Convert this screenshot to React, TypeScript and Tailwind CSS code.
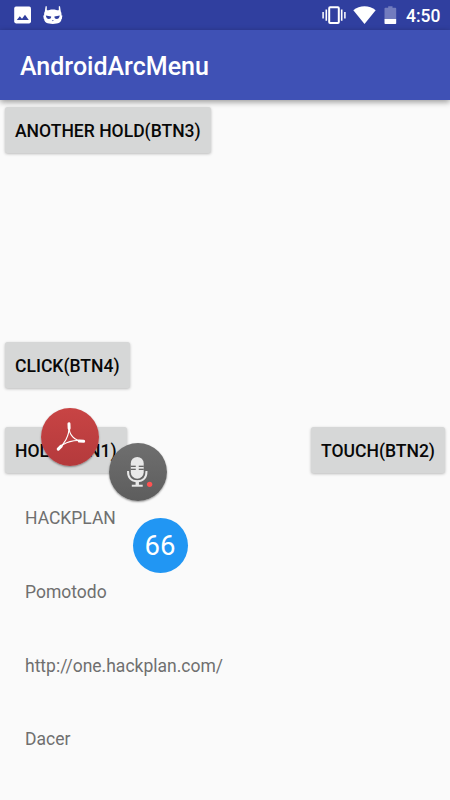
import type { ReactNode } from "react";

const links = ["HACKPLAN", "Pomotodo", "http://one.hackplan.com/", "Dacer"];

function StatusBar() {
  return (
    <div className="flex h-[30px] items-center justify-between bg-[#303f9f] pr-[10px] pl-[14px] text-white">
      <div className="flex items-center gap-3">
        {/* Screenshot notification */}
        <svg className="h-[30px] w-[17px]" viewBox="0 0 17 30" fill="none">
          <rect x="0.2" y="6.6" width="16.8" height="16.8" rx="1.8" fill="#fff" />
          <path d="M2.8 20 5.8 16.2 8 18.7 11 14.8 14.8 20Z" fill="#303f9f" />
        </svg>

        {/* Cyanogen head */}
        <svg className="h-[30px] w-5" viewBox="0 0 20 30" fill="none">
          <path
            d="M2.6 6.2H3.8V10.1C4.6 10.6 5.4 10.1 6.4 9.9C8.6 9.5 11 9.5 13.2 9.9C14.2 10.1 15 10.6 15.8 10.1V6.2H17L17.8 11.6C18.4 12.4 18.5 13.3 18.5 14.4V18.8C18.5 22.4 15.4 23.9 9.8 23.9S1.1 22.4 1.1 18.8V14.4C1.1 13.3 1.2 12.4 1.8 11.6Z"
            fill="#fff"
          />
          <path d="M0.2 15.4H2V19H0.8ZM19.4 15.4H17.6V19H18.8Z" fill="#fff" />
          <path
            d="M2.8 15.4 8.2 16.4C8.2 18.2 7.2 18.9 5.8 18.9S3.2 17.8 2.8 15.4ZM16.8 15.4 11.4 16.4C11.4 18.2 12.4 18.9 13.8 18.9S16.4 17.8 16.8 15.4Z"
            fill="#303f9f"
          />
          <path d="M8.8 20.2H10.8L9.8 21.2Z" fill="#303f9f" />
        </svg>
      </div>

      <div className="flex items-center">
        {/* Vibrate */}
        <svg className="h-[30px] w-6" viewBox="0 0 24 30" fill="none" stroke="#fff">
          <rect x="7.2" y="7.3" width="9.6" height="15.6" rx="0.9" strokeWidth="2" />
          <path d="M4.3 9.6V20.8M19.7 9.6V20.8" strokeWidth="1.6" />
          <path d="M1.1 12V18.4M22.9 12V18.4" strokeWidth="1.5" />
        </svg>

        {/* Wifi */}
        <svg className="ml-[7px] h-[30px] w-[23px]" viewBox="0 0 23 30">
          <path d="M0.3 10.3C6.5 4.8 16.5 4.8 22.7 10.3L11.5 24Z" fill="#fff" />
        </svg>

        {/* Battery */}
        <svg className="ml-2 h-[30px] w-[13px]" viewBox="0 0 13 30">
          <path
            d="M4.2 6.2H8.5V7.8H11.4Q12.2 7.8 12.2 8.6V19H0.5V8.6Q0.5 7.8 1.3 7.8H4.2Z"
            fill="#fff"
            fillOpacity="0.32"
          />
          <path d="M0.5 19H12.2V23.2Q12.2 24 11.4 24H1.3Q0.5 24 0.5 23.2Z" fill="#fff" />
        </svg>

        <span className="-mr-px ml-[9px] w-[35px] pt-px text-[17.5px] leading-[30px] font-medium">4:50</span>
      </div>
    </div>
  );
}

function RaisedButton({ children }: { children: ReactNode }) {
  return (
    <button className="h-[46px] rounded-[2.5px] bg-[#d6d7d7] px-[10px] pt-[2px] text-[17.55px] leading-[44px] font-medium whitespace-nowrap text-[#080808] shadow-[0_1px_3px_rgba(0,0,0,0.26)]">
      {children}
    </button>
  );
}

// Items of the opened arc menu, floating above the page
function ArcMenu() {
  return (
    <>
      <div className="absolute top-[408px] left-[41px] size-[57.5px] rounded-full bg-linear-to-b from-[#c84444] to-[#b43a3c] shadow-[0_1px_2px_rgba(0,0,0,0.4)]">
        <svg className="size-full" viewBox="0 0 58 58" fill="none" stroke="#fff" strokeLinecap="round">
          <path d="M28.3 17C29 28.5 23 37.5 16.7 41.7" strokeWidth="1.2" />
          <path d="M28.3 17C27.6 27.5 34 33.4 43 33.4" strokeWidth="1.2" />
          <path d="M18 40.4C23.5 34.4 34 31.4 43 33.4" strokeWidth="1.1" />
          <path d="M28.2 15.8 28.4 20.6" strokeWidth="3" />
          <path d="M17.4 41.5 20.4 38.4" strokeWidth="3.1" />
          <path d="M38.6 33.3 43 33.6" strokeWidth="3.1" />
        </svg>
      </div>

      <div className="absolute top-[443px] left-[109px] size-[57.5px] rounded-full bg-linear-to-b from-[#6f6f6f] to-[#5d5d5d] shadow-[0_1px_2px_rgba(0,0,0,0.4)]">
        <svg className="size-full" viewBox="0 0 58 58" fill="none">
          <rect x="22" y="14" width="13" height="22" rx="6.5" fill="#e8e8e8" />
          <path d="M22 23.4H27M30 23.4H35M22 26.4H27M30 26.4H35" stroke="#3b3b3b" strokeWidth="1.1" />
          <path d="M19.2 28.2C19 35 22.4 38.5 28.5 38.5S38 35 37.8 28.2" stroke="#e8e8e8" strokeWidth="2" />
          <path d="M28.5 38V43" stroke="#e8e8e8" strokeWidth="3.4" />
          <path d="M23 43.1H34" stroke="#e8e8e8" strokeWidth="2" />
          <circle cx="41" cy="41.7" r="2.7" fill="#ff5252" />
        </svg>
      </div>

      <div className="absolute top-[518px] left-[132.5px] flex size-[55px] items-center justify-center rounded-full bg-[#2196f3] text-[27.5px] leading-none text-white">
        66
      </div>
    </>
  );
}

export default function App() {
  return (
    <div className="relative h-[800px] w-[450px] overflow-hidden bg-[#fafafa] font-['Roboto',sans-serif]">
      <StatusBar />

      <header className="flex h-[70px] items-center bg-[#3f51b5] px-5 pt-1 shadow-[0_2px_6px_rgba(0,0,0,0.4)]">
        <h1 className="text-[25px] leading-8 font-medium text-white">AndroidArcMenu</h1>
      </header>

      <main className="px-[5px] pt-[7px]">
        <div className="flex">
          <RaisedButton>ANOTHER HOLD(BTN3)</RaisedButton>
        </div>

        <div className="mt-[189px] flex">
          <RaisedButton>CLICK(BTN4)</RaisedButton>
        </div>

        <div className="mt-[39px] flex justify-between">
          <RaisedButton>HOLD(BTN1)</RaisedButton>
          <RaisedButton>TOUCH(BTN2)</RaisedButton>
        </div>

        <ul className="mt-[8.4px] pl-5">
          {links.map((link) => (
            <li key={link} className="flex h-[73.75px] items-center text-[17.5px] text-[#6f6f6f]">
              {link}
            </li>
          ))}
        </ul>
      </main>

      <ArcMenu />
    </div>
  );
}
